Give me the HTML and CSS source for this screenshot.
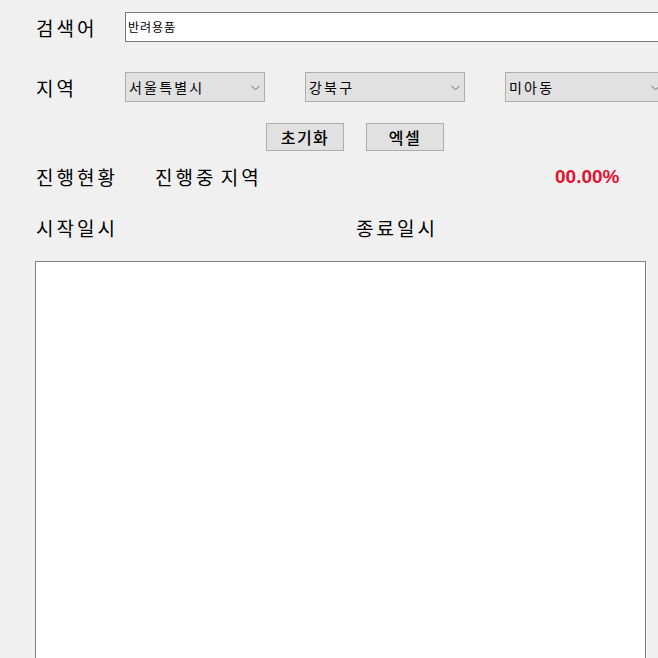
FILE: index.html
```html
<!DOCTYPE html>
<html lang="ko">
<head>
<meta charset="utf-8">
<link rel="stylesheet" href="styles.css">
</head>
<body>
<div class="form">
  <div class="row row-search">
    <span class="label">검색어</span>
    <div class="textbox">반려용품</div>
  </div>
  <div class="row row-region">
    <span class="label">지역</span>
    <div class="combo combo-city"><span>서울특별시</span><svg class="chev" width="9" height="6" viewBox="0 0 9 6"><path d="M0.5 0.8 L4.5 4.8 L8.5 0.8" fill="none" stroke="#6d6d6d" stroke-width="1"/></svg></div>
    <div class="combo combo-gu"><span>강북구</span><svg class="chev" width="9" height="6" viewBox="0 0 9 6"><path d="M0.5 0.8 L4.5 4.8 L8.5 0.8" fill="none" stroke="#6d6d6d" stroke-width="1"/></svg></div>
    <div class="combo combo-dong"><span>미아동</span><svg class="chev" width="9" height="6" viewBox="0 0 9 6"><path d="M0.5 0.8 L4.5 4.8 L8.5 0.8" fill="none" stroke="#6d6d6d" stroke-width="1"/></svg></div>
  </div>
  <div class="row row-buttons">
    <div class="btn">초기화</div>
    <div class="btn">엑셀</div>
  </div>
  <div class="row row-progress">
    <span class="label">진행현황</span>
    <span class="text current">진행중 지역</span>
    <span class="percent">00.00%</span>
  </div>
  <div class="row row-dates">
    <span class="label">시작일시</span>
    <span class="text end">종료일시</span>
  </div>
  <div class="panel"></div>
</div>
</body>
</html>
```

FILE: styles.css
```css
html, body {
  margin: 0;
  padding: 0;
  background: #f0f0f0;
  overflow: hidden;
}
body {
  width: 658px;
  height: 658px;
  font-family: "Noto Sans CJK KR", "Noto Sans", sans-serif;
  color: #000;
}
.form {
  display: flex;
  flex-direction: column;
  padding-left: 36px;
}
.row {
  display: flex;
  align-items: center;
}
.label {
  font-size: 19px;
  letter-spacing: 3px;
  line-height: 1;
  width: 89px;
  flex: none;
  white-space: nowrap;
}
.row-search {
  margin-top: 12px;
  height: 30px;
}
.textbox {
  box-sizing: border-box;
  height: 30px;
  flex: none;
  width: 560px;
  background: #fff;
  border: 1px solid #7a7a7a;
  font-size: 12px;
  letter-spacing: 1px;
  line-height: 28px;
  padding-left: 2px;
}
.row-region {
  margin-top: 30px;
  height: 30px;
}
.combo {
  box-sizing: border-box;
  height: 30px;
  flex: none;
  background: #e1e1e1;
  border: 1px solid #adadad;
  display: flex;
  align-items: center;
  justify-content: space-between;
  padding: 0 4px 0 3px;
  font-size: 14px;
  letter-spacing: 2.2px;
}
.chev { flex: none; margin-top: 1px; }
.combo-city { width: 140px; margin-right: 40px; }
.combo-gu { width: 160px; margin-right: 40px; }
.combo-dong { width: 160px; }
.row-buttons {
  margin-top: 21px;
  height: 28px;
  padding-left: 230px;
  gap: 22px;
}
.btn {
  box-sizing: border-box;
  width: 78px;
  height: 28px;
  background: #e1e1e1;
  border: 1px solid #adadad;
  font-size: 16px;
  font-weight: 500;
  letter-spacing: 1.5px;
  display: flex;
  align-items: center;
  justify-content: center;
}
.row-progress {
  margin-top: 12px;
  height: 26px;
}
.text {
  font-size: 19px;
  letter-spacing: 3px;
  line-height: 1;
  white-space: nowrap;
}
.current { width: 400px; margin-left: 30px; word-spacing: -4px; }
.percent {
  font-family: "Liberation Sans", Arial, sans-serif;
  font-weight: bold;
  font-size: 19px;
  color: #e1112f;
  letter-spacing: 0;
  margin-top: 2px;
}
.row-dates {
  margin-top: 25px;
  height: 26px;
}
.end { margin-left: 231px; }
.panel {
  margin-top: 21px;
  margin-left: -1px;
  box-sizing: border-box;
  width: 611px;
  height: 420px;
  background: #fff;
  border: 1px solid #828282;
}
```
